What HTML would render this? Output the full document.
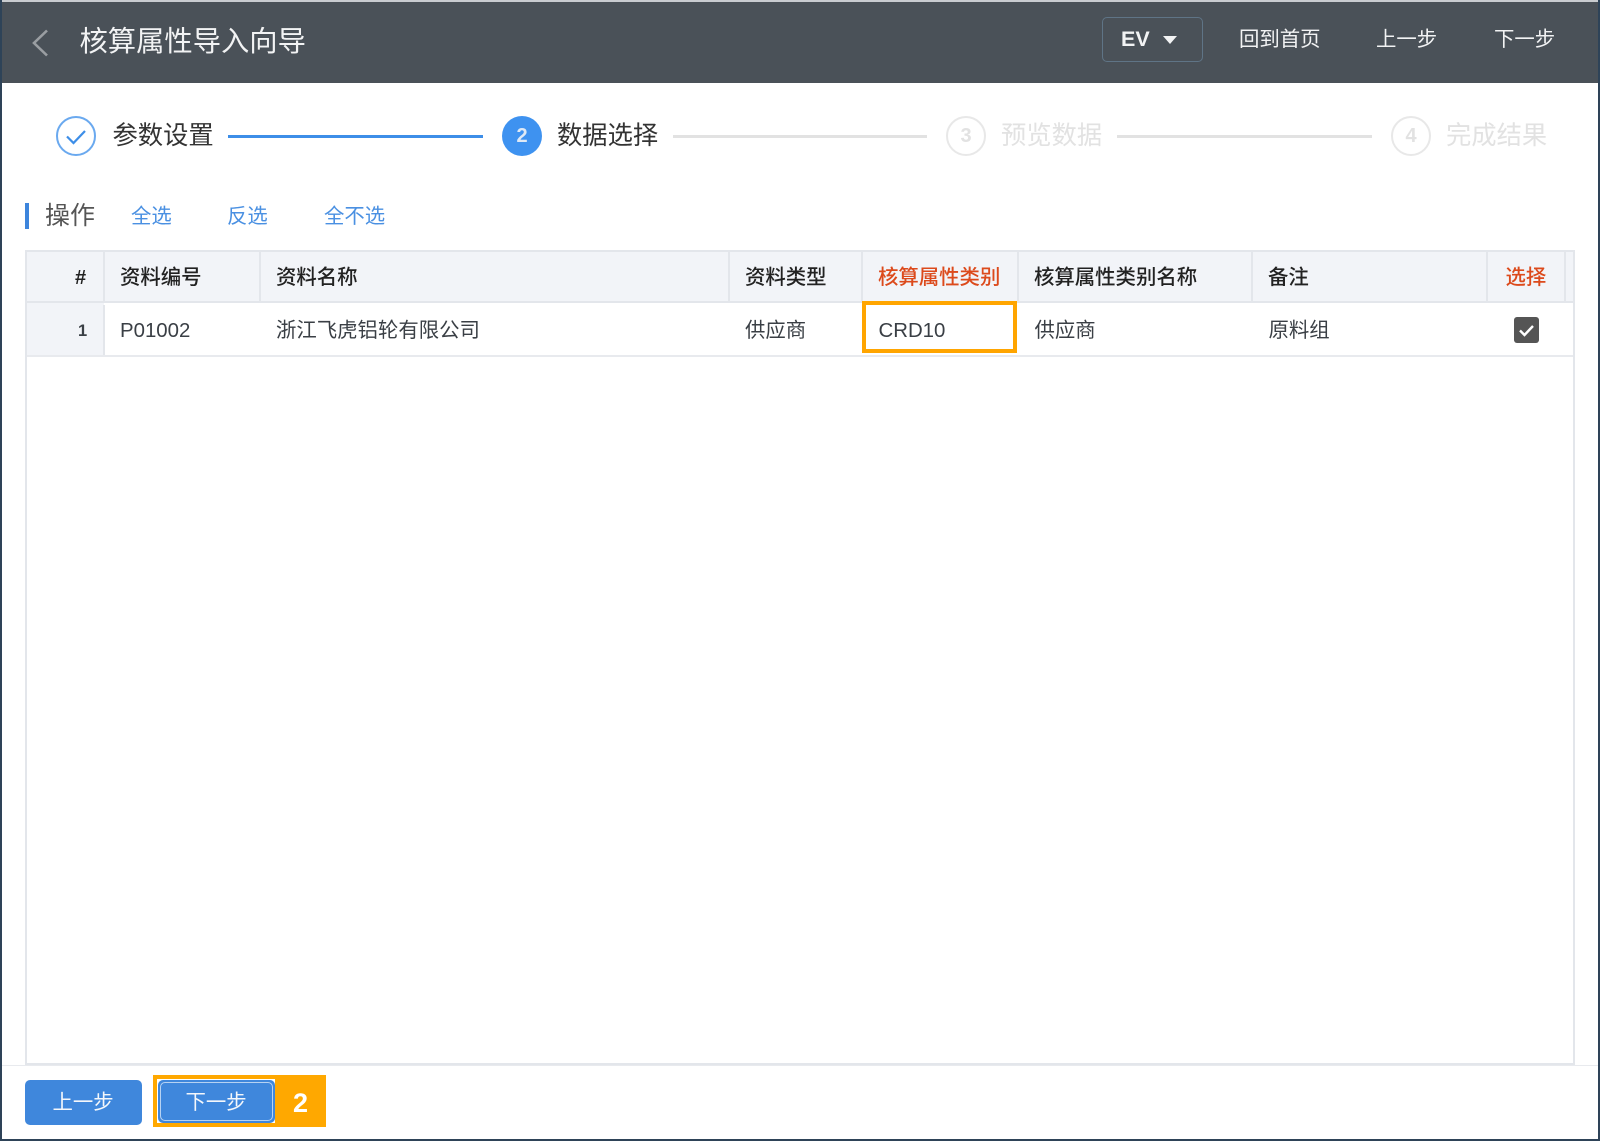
<!DOCTYPE html>
<html lang="zh-CN">
<head>
<meta charset="utf-8">
<title>核算属性导入向导</title>
<style>
html,body{margin:0;padding:0;background:#fff}
body{position:relative;width:1600px;height:1141px;overflow:hidden;font-family:"Liberation Sans","Noto Sans CJK SC",sans-serif;color:#333;filter:blur(.35px)}
.a{position:absolute;box-sizing:border-box}
.t{position:absolute;white-space:nowrap;line-height:30px;height:30px;font-size:20.4px}
.h{font-weight:500;color:#222;font-family:"Liberation Sans","Noto Sans CJK SC",sans-serif}
.w{color:#f2f3f4}
.g{color:#e2e2e2;font-size:25.3px}
.d{font-size:25.3px;color:#333}
.l{color:#4a90e2}
.c{color:#3a3f45}
.v{background:#e3e6eb;width:2px}
.n{position:absolute;box-sizing:border-box;width:40px;height:40px;border-radius:50%;top:116px;text-align:center;line-height:37px;font-size:20px;font-weight:700}
</style>
</head>
<body>
<!-- window frame -->
<div class="a" style="left:0;top:0;width:1600px;height:2px;background:#c9ccd0"></div>
<div class="a" style="left:0;top:0;width:2px;height:1141px;background:#2e4358"></div>
<div class="a" style="left:1598px;top:0;width:2px;height:1141px;background:#2e4358"></div>
<div class="a" style="left:0;top:1139px;width:1600px;height:2px;background:#2e4358"></div>

<!-- header -->
<div class="a" style="left:2px;top:2px;width:1596px;height:81px;background:#4a5158"></div>
<svg class="a" style="left:30px;top:27px" width="22" height="32" viewBox="0 0 22 32"><path d="M17 3.5 4 16l13 12.5" fill="none" stroke="#9a9ea2" stroke-width="2.6"/></svg>
<div class="t w" style="left:79.5px;top:25.5px;font-size:28.3px">核算属性导入向导</div>
<div class="a" style="left:1102px;top:17px;width:101px;height:45px;border:1.5px solid #5f7486;border-radius:5px"></div>
<div class="t w" style="left:1121px;top:24px;font-size:21.5px;font-weight:700">EV</div>
<svg class="a" style="left:1162px;top:35px" width="16" height="10" viewBox="0 0 16 10"><path d="M1 1h14L8 9z" fill="#f2f3f4"/></svg>
<div class="t w" style="left:1239px;top:25px">回到首页</div>
<div class="t w" style="left:1376px;top:25px">上一步</div>
<div class="t w" style="left:1494px;top:25px">下一步</div>

<!-- steps -->
<div class="n" style="left:56px;border:2px solid #6aa9ef"></div>
<svg class="a" style="left:56px;top:116px" width="40" height="40" viewBox="0 0 40 40"><path d="M11 20.5l6.5 6.5 11.5-12" fill="none" stroke="#3d8ee8" stroke-width="2.2"/></svg>
<div class="t d" style="left:112.5px;top:121px">参数设置</div>
<div class="a" style="left:228px;top:134.5px;width:255px;height:3px;background:#3d8ee8"></div>
<div class="n" style="left:502px;background:#3e92f0;color:#dfe9f5;line-height:40px">2</div>
<div class="t d" style="left:557px;top:121px">数据选择</div>
<div class="a" style="left:673px;top:134.5px;width:254px;height:3px;background:#e2e2e2"></div>
<div class="n" style="left:946px;border:2px solid #e8e8e8;color:#e2e2e2">3</div>
<div class="t g" style="left:1001px;top:121px">预览数据</div>
<div class="a" style="left:1117px;top:134.5px;width:255px;height:3px;background:#e2e2e2"></div>
<div class="n" style="left:1391px;border:2px solid #e8e8e8;color:#e2e2e2">4</div>
<div class="t g" style="left:1446px;top:121px">完成结果</div>

<!-- operations -->
<div class="a" style="left:25px;top:203px;width:4px;height:26px;background:#3d85dc"></div>
<div class="t" style="left:45px;top:201px;font-size:25px;color:#555">操作</div>
<div class="t l" style="left:131px;top:202px">全选</div>
<div class="t l" style="left:227px;top:202px">反选</div>
<div class="t l" style="left:324px;top:202px">全不选</div>

<!-- table -->
<div class="a" style="left:25px;top:250px;width:1550px;height:815px;border:2px solid #e3e6eb;background:#fff"></div>
<div class="a" style="left:27px;top:252px;width:1546px;height:50px;background:#f2f4f8"></div>
<div class="a" style="left:27px;top:301px;width:1546px;height:2px;background:#e3e6eb"></div>
<div class="a" style="left:27px;top:303px;width:77px;height:52px;background:#f2f4f8"></div>
<div class="a" style="left:27px;top:355px;width:1546px;height:1.5px;background:#e8eaee"></div>
<div class="a v" style="left:103px;top:252px;height:50px"></div>
<div class="a v" style="left:103px;top:305px;height:50px"></div>
<div class="a v" style="left:259px;top:252px;height:50px"></div>
<div class="a v" style="left:728px;top:252px;height:50px"></div>
<div class="a v" style="left:861px;top:252px;height:50px"></div>
<div class="a v" style="left:1017px;top:252px;height:50px"></div>
<div class="a v" style="left:1251px;top:252px;height:50px"></div>
<div class="a v" style="left:1486px;top:252px;height:50px"></div>
<div class="a v" style="left:1564px;top:252px;height:50px"></div>

<div class="t h" style="left:75px;top:263px;font-size:20px;font-weight:700">#</div>
<div class="t h" style="left:120px;top:263px">资料编号</div>
<div class="t h" style="left:276px;top:263px">资料名称</div>
<div class="t h" style="left:745px;top:263px">资料类型</div>
<div class="t h" style="left:878px;top:263px;color:#dc4a1c">核算属性类别</div>
<div class="t h" style="left:1034px;top:263px">核算属性类别名称</div>
<div class="t h" style="left:1268px;top:263px">备注</div>
<div class="t h" style="left:1505.5px;top:263px;color:#dc4a1c">选择</div>

<div class="t c" style="left:78px;top:316px;font-size:16.5px;font-weight:700">1</div>
<div class="t c" style="left:120px;top:316px">P01002</div>
<div class="t c" style="left:276px;top:316px">浙江飞虎铝轮有限公司</div>
<div class="t c" style="left:745px;top:316px">供应商</div>
<div class="a" style="left:862px;top:301px;width:155px;height:52px;border:4px solid #ffa500"></div>
<div class="t c" style="left:878.5px;top:316px">CRD10</div>
<div class="t c" style="left:1034.5px;top:316px">供应商</div>
<div class="t c" style="left:1268.5px;top:316px">原料组</div>
<div class="a" style="left:1514px;top:317px;width:25px;height:26px;background:#555;border-radius:3px"></div>
<svg class="a" style="left:1514px;top:317px" width="25" height="26" viewBox="0 0 25 26"><path d="M6 13.5l4.5 4.5L19 9" fill="none" stroke="#fff" stroke-width="2.4"/></svg>

<!-- footer -->
<div class="a" style="left:2px;top:1064.5px;width:1596px;height:1.5px;background:#e8eaee"></div>
<div class="a" style="left:25px;top:1080px;width:117px;height:45px;background:#3f87dc;border-radius:5px"></div>
<div class="t" style="left:52.5px;top:1088px;color:#f4f7fb">上一步</div>
<div class="a" style="left:153px;top:1075px;width:173px;height:52px;background:#ffa800"></div>
<div class="a" style="left:157px;top:1079px;width:118px;height:44px;background:#fff"></div>
<div class="a" style="left:158px;top:1080px;width:117px;height:43px;background:#3f87dc;border-radius:5px"></div>
<div class="a" style="left:160px;top:1082px;width:113px;height:39px;border:1.5px solid #b7d2f2;border-radius:5px"></div>
<div class="t" style="left:185.5px;top:1088px;color:#f4f7fb">下一步</div>
<div class="t" style="left:293px;top:1088px;color:#fff;font-size:27px;font-weight:700">2</div>
</body>
</html>
